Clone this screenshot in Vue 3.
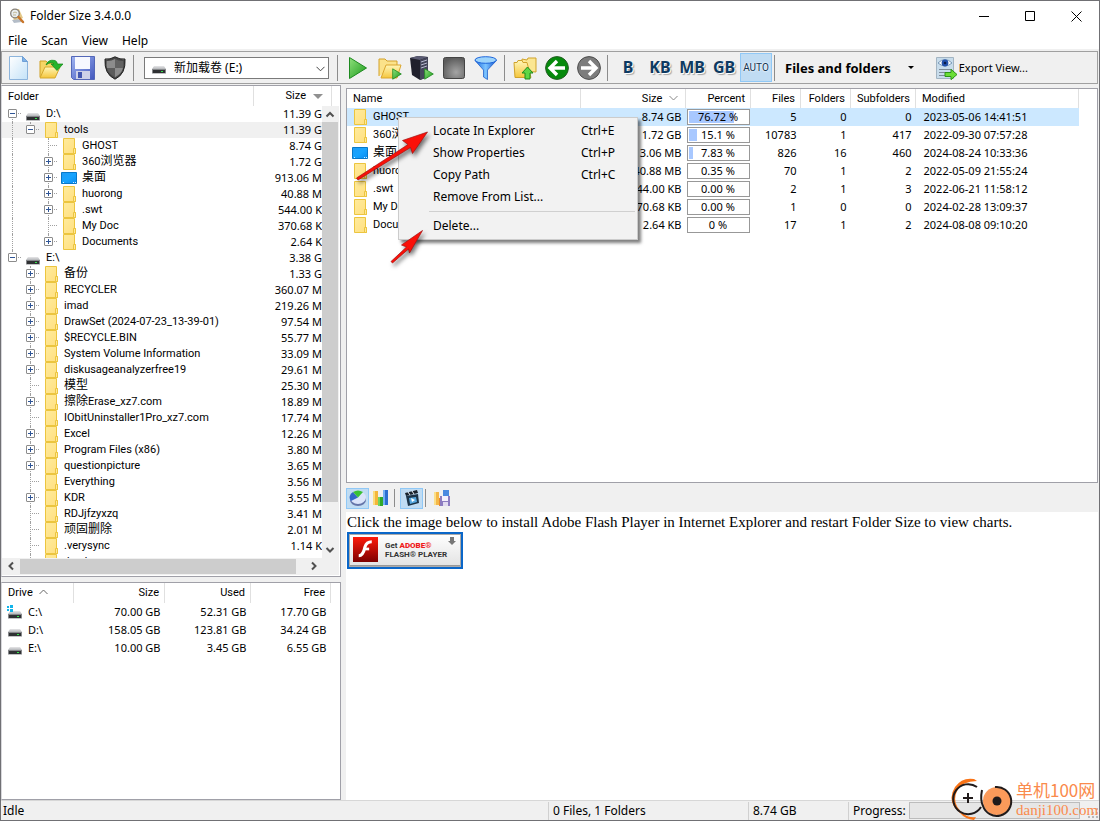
<script setup>
import { ref } from 'vue'

const menus = ['File', 'Scan', 'View', 'Help']
const units = ['B', 'KB', 'MB', 'GB']
const scope = ref('e')

// g: guide columns to the left of the node; box: '+', '-' or '' for a leaf
const tree = [
  { g: [], box: '-', icon: 'drive', name: 'D:\\', size: '11.39 G', first: true },
  { g: ['v'], box: '-', icon: 'folder', name: 'tools', size: '11.39 G', sel: true, last: true },
  { g: ['v', ''], box: '', icon: 'folder', name: 'GHOST', size: '8.74 G' },
  { g: ['v', ''], box: '+', icon: 'folder', name: '360浏览器', size: '1.72 G' },
  { g: ['v', ''], box: '+', icon: 'desktop', name: '桌面', size: '913.06 M' },
  { g: ['v', ''], box: '+', icon: 'folder', name: 'huorong', size: '40.88 M' },
  { g: ['v', ''], box: '+', icon: 'folder', name: '.swt', size: '544.00 K' },
  { g: ['v', ''], box: '', icon: 'folder', name: 'My Doc', size: '370.68 K' },
  { g: ['v', ''], box: '+', icon: 'folder', name: 'Documents', size: '2.64 K', last: true },
  { g: [], box: '-', icon: 'drive', name: 'E:\\', size: '3.38 G', last: true },
  { g: [''], box: '+', icon: 'folder', name: '备份', size: '1.33 G' },
  { g: [''], box: '+', icon: 'folder', name: 'RECYCLER', size: '360.07 M' },
  { g: [''], box: '+', icon: 'folder', name: 'imad', size: '219.26 M' },
  { g: [''], box: '+', icon: 'folder', name: 'DrawSet (2024-07-23_13-39-01)', size: '97.54 M' },
  { g: [''], box: '+', icon: 'folder', name: '$RECYCLE.BIN', size: '55.77 M' },
  { g: [''], box: '+', icon: 'folder', name: 'System Volume Information', size: '33.09 M' },
  { g: [''], box: '+', icon: 'folder', name: 'diskusageanalyzerfree19', size: '29.61 M' },
  { g: [''], box: '', icon: 'folder', name: '模型', size: '25.30 M' },
  { g: [''], box: '+', icon: 'folder', name: '擦除Erase_xz7.com', size: '18.89 M' },
  { g: [''], box: '', icon: 'folder', name: 'IObitUninstaller1Pro_xz7.com', size: '17.74 M' },
  { g: [''], box: '+', icon: 'folder', name: 'Excel', size: '12.26 M' },
  { g: [''], box: '+', icon: 'folder', name: 'Program Files (x86)', size: '3.80 M' },
  { g: [''], box: '+', icon: 'folder', name: 'questionpicture', size: '3.65 M' },
  { g: [''], box: '', icon: 'folder', name: 'Everything', size: '3.56 M' },
  { g: [''], box: '+', icon: 'folder', name: 'KDR', size: '3.55 M' },
  { g: [''], box: '', icon: 'folder', name: 'RDJjfzyxzq', size: '3.41 M' },
  { g: [''], box: '', icon: 'folder', name: '顽固删除', size: '2.01 M' },
  { g: [''], box: '', icon: 'folder', name: '.verysync', size: '1.14 K' },
  { g: [''], box: '', icon: 'folder', name: '.bash', size: '' },
]

const drives = [
  { name: 'C:\\', size: '70.00 GB', used: '52.31 GB', free: '17.70 GB', icon: 'sysdrive' },
  { name: 'D:\\', size: '158.05 GB', used: '123.81 GB', free: '34.24 GB', icon: 'drive' },
  { name: 'E:\\', size: '10.00 GB', used: '3.45 GB', free: '6.55 GB', icon: 'drive' },
]

const files = [
  { name: 'GHOST', size: '8.74 GB', pct: 76.72, label: '76.72 %', files: 5, folders: 0, subs: 0, mod: '2023-05-06 14:41:51', icon: 'folder', sel: true },
  { name: '360浏览器', size: '1.72 GB', pct: 15.1, label: '15.1 %', files: 10783, folders: 1, subs: 417, mod: '2022-09-30 07:57:28', icon: 'folder' },
  { name: '桌面', size: '913.06 MB', pct: 7.83, label: '7.83 %', files: 826, folders: 16, subs: 460, mod: '2024-08-24 10:33:36', icon: 'desktop' },
  { name: 'huorong', size: '40.88 MB', pct: 0, label: '0.35 %', files: 70, folders: 1, subs: 2, mod: '2022-05-09 21:55:24', icon: 'folder' },
  { name: '.swt', size: '544.00 KB', pct: 0, label: '0.00 %', files: 2, folders: 1, subs: 3, mod: '2022-06-21 11:58:12', icon: 'folder' },
  { name: 'My Doc', size: '370.68 KB', pct: 0, label: '0.00 %', files: 1, folders: 0, subs: 0, mod: '2024-02-28 13:09:37', icon: 'folder' },
  { name: 'Documents', size: '2.64 KB', pct: 0, label: '0 %', files: 17, folders: 1, subs: 2, mod: '2024-08-08 09:10:20', icon: 'folder' },
]

const actions = [
  { text: 'Locate In Explorer', key: 'Ctrl+E' },
  { text: 'Show Properties', key: 'Ctrl+P' },
  { text: 'Copy Path', key: 'Ctrl+C' },
  { text: 'Remove From List...', key: '' },
]

// Han runs are set one size larger than Latin runs
const runs = (s) => s.match(/[\u4e00-\u9fff]+|[^\u4e00-\u9fff]+/g).map((t) => ({ t, han: /[\u4e00-\u9fff]/.test(t) }))
</script>

<template>
  <svg class="defs" aria-hidden="true">
    <defs>
      <linearGradient id="gFold" x1="0" y1="0" x2="1" y2="1"><stop offset="0" stop-color="#ffeb9c" /><stop offset="1" stop-color="#ffdf80" /></linearGradient>
      <linearGradient id="gYel" x1="0" y1="0" x2="0" y2="1"><stop offset="0" stop-color="#fff6b8" /><stop offset="1" stop-color="#f5c63c" /></linearGradient>
      <linearGradient id="gGreen" x1="0" y1="0" x2="1" y2="1"><stop offset="0" stop-color="#8fe07c" /><stop offset="1" stop-color="#1b9a1b" /></linearGradient>
      <linearGradient id="gPage" x1="0" y1="0" x2="1" y2="1"><stop offset="0" stop-color="#ffffff" /><stop offset="1" stop-color="#c3e2f8" /></linearGradient>
      <linearGradient id="gSave" x1="0" y1="0" x2="1" y2="1"><stop offset="0" stop-color="#9fb4f2" /><stop offset="1" stop-color="#4257bd" /></linearGradient>
      <linearGradient id="gBlue" x1="0" y1="0" x2="1" y2="0"><stop offset="0" stop-color="#1a6ae0" /><stop offset="0.5" stop-color="#7cc4ff" /><stop offset="1" stop-color="#0e50d0" /></linearGradient>
      <radialGradient id="gStop" cx="0.6" cy="0.7" r="0.7"><stop offset="0" stop-color="#a4a4a4" /><stop offset="1" stop-color="#5c5c5c" /></radialGradient>
      <linearGradient id="gDesk" x1="0" y1="0" x2="1" y2="1"><stop offset="0" stop-color="#1f9cf5" /><stop offset="0.5" stop-color="#17a4ff" /><stop offset="1" stop-color="#0a8cf0" /></linearGradient>
      <linearGradient id="gDrive" x1="0" y1="0" x2="0" y2="1"><stop offset="0" stop-color="#e6e6e8" /><stop offset="1" stop-color="#b4b6b9" /></linearGradient>
      <linearGradient id="gFlash" x1="0" y1="0" x2="0" y2="1"><stop offset="0" stop-color="#ff1a0a" /><stop offset="1" stop-color="#7c0000" /></linearGradient>
      <symbol id="folder" viewBox="0 0 16 16">
        <path d="M2.500.5h11v10h1v5h-12z" fill="url(#gFold)" stroke="#ecc53f" />
        <path d="M12.500 10.500h2v5h-2z" fill="#ffe89a" stroke="#ecc53f" />
      </symbol>
      <symbol id="desktop" viewBox="0 0 16 16">
        <path d="M.5 2.500h15v11H.5z" fill="url(#gDesk)" stroke="#0878c8" />
        <path d="M2 12.500h1m9 0h1m1 0h1" stroke="#d8f0ff" />
      </symbol>
      <symbol id="drive" viewBox="0 0 16 16">
        <path d="M3 7h10l2 3H1z" fill="url(#gDrive)" />
        <path d="M1 10h14v4.500H1z" fill="#85878a" /><path d="M2 11h12v3H2z" fill="#2f3133" />
        <path d="M10 12h2v1h-2z" fill="#35e64a" />
      </symbol>
      <symbol id="sysdrive" viewBox="0 0 16 16">
        <path d="M3 7h10l2 3H1z" fill="url(#gDrive)" />
        <path d="M1 10h14v4.500H1z" fill="#85878a" /><path d="M2 11h12v3H2z" fill="#2f3133" /><path d="M10 12h2v1h-2z" fill="#35e64a" />
        <path d="M0 2h2v2H0zM3 1h3v3H3zM0 5h2v2H0zM3 5h3v3H3z" fill="#12b4ea" />
      </symbol>
      <symbol id="play" viewBox="0 0 10 12"><path d="M.7.8 9.300 6 .7 11.200z" fill="url(#gGreen)" stroke="#218a21" stroke-width=".8" stroke-linejoin="round" /></symbol>
    </defs>
  </svg>

  <div class="window">
    <header class="title">
      <svg class="app" viewBox="0 0 16 16" aria-hidden="true">
        <path d="M2 2 10 1l4 9-9 3z" fill="#e3c888" /><path d="M3 12 11 11l2 3-8 1z" fill="#b4bdc8" />
        <circle cx="6" cy="5.500" r="4.300" fill="#e9eef0" stroke="#85807a" stroke-width="1.300" />
        <path d="M4 5q2-2 4 0M4 7h3" stroke="#c2b894" fill="none" />
        <path d="m9.500 9 4.500 5" stroke="#c8762b" stroke-width="2.500" stroke-linecap="round" />
      </svg>
      <h1>Folder Size 3.4.0.0</h1>
      <button class="cap" aria-label="Minimize"><svg viewBox="0 0 11 11"><path d="M0 5.500h10" stroke="#000" /></svg></button>
      <button class="cap" aria-label="Maximize"><svg viewBox="0 0 11 11"><path d="M.5.5h9v9h-9z" fill="none" stroke="#000" /></svg></button>
      <button class="cap" aria-label="Close"><svg viewBox="0 0 11 11"><path d="m.5.5 10 10m0-10-10 10" stroke="#000" /></svg></button>
    </header>

    <nav class="menubar"><button v-for="m in menus" :key="m">{{ m }}</button></nav>

    <div class="toolbar" role="toolbar">
      <button class="tb" aria-label="New">
        <svg viewBox="0 0 24 24"><path d="M2.500.5h13l5 5v18h-18z" fill="url(#gPage)" stroke="#8cb4dc" /><path d="M15.500.5v5h5z" fill="#7fb2e6" stroke="#6f9fd6" /></svg>
      </button>
      <button class="tb" aria-label="Open">
        <svg viewBox="0 0 24 24"><path d="M1 21V5h6l2 2h7v5" fill="#f5d565" stroke="#d0a024" /><path d="M1 22 6 11h15l-5 11z" fill="url(#gYel)" stroke="#d5a82c" /><path d="M7 9q2-6 9-4.500 2 .8 2.500 3.500H24l-6 6.500L12 8h3q-3-3-8 1z" fill="#27b42c" stroke="#118618" stroke-width=".7" /></svg>
      </button>
      <button class="tb" aria-label="Save">
        <svg viewBox="0 0 24 24"><path d="M.5.5h23v23h-21l-2-2z" fill="url(#gSave)" stroke="#5367b8" /><path d="M4 1h15v12H4z" fill="#f6f8ff" /><path d="M5 15h14v8H5z" fill="#cdd2e8" /><path d="M7 16h4v6H7z" fill="#4257b0" /></svg>
      </button>
      <button class="tb" aria-label="Run as administrator">
        <svg viewBox="0 0 24 24"><path d="M12 .8q5 3 10 2.200 1 15-10 20.200Q1 18 2 3 7 3.800 12 .8z" fill="#484848" stroke="#222" /><path d="M12 3v9H4Q3.300 9 3.700 5 8 5.400 12 3z" fill="#8c8c8c" /><path d="M12 12h8q-1.500 6-8 9.200z" fill="#8c8c8c" /><path d="M12 3q4 2.400 8.300 2 .4 4-.3 7h-8z" fill="#626262" /><path d="M4 12h8v9.200Q5.500 18 4 12z" fill="#5c5c5c" /></svg>
      </button>
      <span class="sep"></span>
      <label class="combo">
        <svg class="ic16" aria-hidden="true"><use href="#drive" /></svg>
        <select v-model="scope" aria-label="Drive to scan"><option value="e">新加载卷 (E:)</option></select>
        <svg class="chev" viewBox="0 0 9 6" aria-hidden="true"><path d="m.5.8 4 4 4-4" fill="none" stroke="#444" /></svg>
      </label>
      <span class="sep"></span>
      <button class="tb" aria-label="Start scan"><svg viewBox="0 0 24 24"><path d="M3.500 1.500v21L20.500 12z" fill="url(#gGreen)" stroke="#1d8a1f" stroke-linejoin="round" /></svg></button>
      <button class="tb" aria-label="Scan folder">
        <svg viewBox="0 0 24 24"><path d="M1 20V3h6l2 2h10v5" fill="#fbe28a" stroke="#d3a12b" /><path d="m3 22 5-13h15l-4 13z" fill="url(#gYel)" stroke="#dba62e" /><use href="#play" x="14" y="12" width="10" height="12" /></svg>
      </button>
      <button class="tb" aria-label="Scan computer">
        <svg viewBox="0 0 24 24"><path d="m0 2 8-2 10 1v20l-8 3-8-5z" fill="#20202c" /><path d="m0 2 8-2 10 1-8 3z" fill="#5b5c74" /><path d="m10 4 8-3v20l-8 3z" fill="#45465a" /><path d="m11 6 6-2m-6 5 6-2m-6 5 6-2" stroke="#b7b9d0" /><use href="#play" x="14" y="12" width="10" height="12" /></svg>
      </button>
      <button class="tb" aria-label="Stop"><svg viewBox="0 0 24 24"><rect x="1.500" y="1.500" width="21" height="21" rx="2" fill="url(#gStop)" stroke="#444" /></svg></button>
      <button class="tb" aria-label="Filter">
        <svg viewBox="0 0 24 24"><path d="M1 4.500 9.500 14v7l4 2.500V14L22.500 4.500z" fill="url(#gBlue)" stroke="#1354c4" stroke-width=".7" /><ellipse cx="11.700" cy="4" rx="10.700" ry="3.300" fill="#9dd4fb" stroke="#1e66dc" /></svg>
      </button>
      <span class="sep"></span>
      <button class="tb" aria-label="Up one level">
        <svg viewBox="0 0 24 24"><path d="M9 15V3l5 1 1-2h8v14z" fill="#fbe692" stroke="#d0a32b" /><path d="M1 6.500h3l1-2h4l1 2h4l4 15H2z" fill="url(#gYel)" stroke="#d0a32b" /><path d="m14.500 11 5.500 6h-3v6h-5v-6H9z" fill="#5fd645" stroke="#1f8a1c" /></svg>
      </button>
      <button class="tb" aria-label="Back"><svg viewBox="0 0 24 24"><circle cx="12" cy="12" r="11.400" fill="#068a0c" stroke="#245c24" /><path d="M20 12H6m6-7-7 7 7 7" fill="none" stroke="#fff" stroke-width="3.400" /></svg></button>
      <button class="tb" aria-label="Forward"><svg viewBox="0 0 24 24"><circle cx="12" cy="12" r="11.400" fill="#7c7c7c" stroke="#4c4c4c" /><path d="M4 12h14m-6-7 7 7-7 7" fill="none" stroke="#fff" stroke-width="3.400" /></svg></button>
      <span class="sep"></span>
      <button v-for="u in units" :key="u" class="tb unit">{{ u }}</button>
      <button class="tb auto" aria-pressed="true">AUTO</button>
      <span class="sep"></span>
      <button class="scope">Files and folders <i class="caret"></i></button>
      <button class="export">
        <svg viewBox="0 0 24 24" aria-hidden="true"><path d="M2.500 1.500h17v21h-17z" fill="#c8dceb" stroke="#a3b4c2" /><path d="M4 7q7-7 14 0-7 6-14 0z" fill="#fff" stroke="#7898b8" /><circle cx="11" cy="7" r="3.400" fill="#2452ac" /><circle cx="11" cy="7" r="1.300" fill="#0a1c48" /><path d="M5 13.500h12M5 16.500h6m-6 3h6" stroke="#7d8b98" /><path d="M11 16.500h6v-3.200l6 5.200-6 5.200v-3.200h-6z" fill="#6ade34" stroke="#2d9418" /></svg>
        Export View...
      </button>
    </div>

    <main class="body">
      <section class="side">
        <div class="panel folders">
          <div class="head"><span class="grow">Folder</span><span class="hsize">Size <i class="down"></i></span></div>
          <div class="scrollrow">
            <div class="clip">
              <table class="tree" aria-label="Folders">
                <tbody>
                  <tr v-for="(n, i) in tree" :key="i" :class="{ sel: n.sel }">
                    <td>
                      <div class="node">
                        <span v-for="(k, j) in n.g" :key="j" class="guide" :class="k"></span>
                        <span class="guide tee" :class="{ last: n.last, first: n.first }">
                          <button v-if="n.box" class="box" :aria-label="(n.box === '+' ? 'Expand ' : 'Collapse ') + n.name"><svg viewBox="0 0 9 9"><path :d="n.box === '+' ? 'M2 4.500h5M4.500 2v5' : 'M2 4.500h5'" stroke="#2f5596" /></svg></button>
                        </span>
                        <svg class="ic16" aria-hidden="true"><use :href="'#' + n.icon" /></svg>
                        <span class="name"><span v-for="(r, q) in runs(n.name)" :key="q" :class="{ han: r.han }">{{ r.t }}</span></span>
                      </div>
                    </td>
                    <td class="num">{{ n.size }}</td>
                  </tr>
                </tbody>
              </table>
            </div>
            <div class="vbar" aria-hidden="true">
              <svg viewBox="0 0 16 16"><path d="m4.500 10.500 3.500-3.500 3.500 3.500" fill="none" stroke="#505050" stroke-width="2" /></svg>
              <i class="thumb"></i><i class="rest"></i>
              <svg viewBox="0 0 16 16"><path d="m4.500 6 3.500 3.500L11.500 6" fill="none" stroke="#505050" stroke-width="2" /></svg>
            </div>
          </div>
          <div class="hbar" aria-hidden="true">
            <svg viewBox="0 0 16 16"><path d="M10 4.500 6.500 8l3.500 3.500" fill="none" stroke="#505050" stroke-width="2" /></svg>
            <i class="thumb"></i><i class="rest"></i>
            <svg viewBox="0 0 16 16"><path d="M6 4.500 9.500 8 6 11.500" fill="none" stroke="#505050" stroke-width="2" /></svg>
            <i class="corner"></i>
          </div>
        </div>

        <div class="panel drives">
          <table class="list">
            <colgroup><col /><col class="w91" /><col class="w86" /><col class="w80" /></colgroup>
            <thead><tr>
              <th class="l">Drive <svg class="sort" viewBox="0 0 9 6"><path d="m.5 5 4-4 4 4" fill="none" stroke="#666" /></svg></th>
              <th>Size</th><th>Used</th><th>Free</th>
            </tr></thead>
            <tbody>
              <tr v-for="d in drives" :key="d.name">
                <td><div class="cell"><svg class="ic16" aria-hidden="true"><use :href="'#' + d.icon" /></svg>{{ d.name }}</div></td>
                <td class="num">{{ d.size }}</td><td class="num">{{ d.used }}</td><td class="num">{{ d.free }}</td>
              </tr>
            </tbody>
          </table>
        </div>
      </section>

      <section class="content">
        <div class="panel files">
          <table class="list">
            <colgroup><col /><col class="w105" /><col class="w65" /><col class="w50" /><col class="w50" /><col class="w65" /><col class="w163" /></colgroup>
            <thead><tr>
              <th class="l">Name</th>
              <th>Size <svg class="sort" viewBox="0 0 9 6"><path d="m.5 1 4 4 4-4" fill="none" stroke="#888" /></svg></th>
              <th>Percent</th><th>Files</th><th>Folders</th><th>Subfolders</th><th class="l">Modified</th>
            </tr></thead>
            <tbody>
              <tr v-for="f in files" :key="f.name" :class="{ sel: f.sel }">
                <td><div class="cell"><svg class="ic16" aria-hidden="true"><use :href="'#' + f.icon" /></svg><span class="name"><span v-for="(r, q) in runs(f.name)" :key="q" :class="{ han: r.han }">{{ r.t }}</span></span></div></td>
                <td class="num">{{ f.size }}</td>
                <td class="pc"><div class="pbox"><div class="ptrack"><div class="pfill" :style="{ width: f.pct + '%' }"></div></div><span>{{ f.label }}</span></div></td>
                <td class="num">{{ f.files }}</td><td class="num">{{ f.folders }}</td><td class="num">{{ f.subs }}</td>
                <td class="mod">{{ f.mod }}</td>
              </tr>
            </tbody>
          </table>

          <div class="popup" role="menu">
            <button v-for="a in actions" :key="a.text" role="menuitem"><span>{{ a.text }}</span><kbd>{{ a.key }}</kbd></button>
            <hr />
            <button role="menuitem"><span>Delete...</span></button>
          </div>
          <svg class="arrows" viewBox="0 0 80 146" aria-hidden="true">
            <path d="M3.500 60 55 26.500 49.500 22.500 74.500 14 59.500 35.500 57.500 29.500 5 62z" fill="#fa1008" stroke="#a01010" stroke-width=".7" />
            <path d="M38 143.500 53.500 129 48.500 127 69.500 112.500 56.500 135 55.500 131 39.500 145z" fill="#fa1008" stroke="#a01010" stroke-width=".7" />
          </svg>
        </div>

        <div class="charts" role="toolbar">
          <button class="on" aria-label="Pie chart">
            <svg viewBox="0 0 18 18"><ellipse cx="9" cy="11" rx="8" ry="6" fill="#6474a8" /><ellipse cx="9" cy="8.500" rx="8" ry="6.500" fill="#dbe4fa" /><path d="M9 8.500 2 12a8 6.500 0 0 1 2-9z" fill="#3266c8" /><path d="M9 8.500 4 3q5-3 10 0z" fill="#39c136" /></svg>
          </button>
          <button aria-label="Bar chart">
            <svg viewBox="0 0 18 18"><path d="M1 2h5v14H1z" fill="#f4b63a" /><path d="M1 2h2v14H1z" fill="#fbdc7c" /><path d="M6 8h5v9H6z" fill="#31a82a" /><path d="M6 8h2v9H6z" fill="#70d45e" /><path d="M11 1h5v15h-5z" fill="#2c6fd0" /><path d="M11 1h2v15h-2z" fill="#72b0f4" /></svg>
          </button>
          <span class="sep"></span>
          <button class="on" aria-label="Animation">
            <svg viewBox="0 0 18 18"><path d="m2 4 12-3 1 3L3 7z" fill="#18222c" /><path d="m5 3 2 3m2-4 2 3" stroke="#e8eef4" /><path d="m3 7 12-2 1 9-11 3z" fill="#1c3448" /><path d="m6 9 7-1 1 5-7 2z" fill="#56a8e0" /><path d="m8 9 4 2-3 2z" fill="#fff" /></svg>
          </button>
          <span class="sep"></span>
          <button aria-label="Save chart">
            <svg viewBox="0 0 18 18"><path d="M0 3h5v13H0z" fill="#f4b848" /><path d="M0 3h2v13H0z" fill="#fbe08c" /><path d="M5 9h3v8H5z" fill="#e68a30" /><path d="M9 1h6v8H9z" fill="#4a8ae0" /><path d="M6 7h10v10H6z" fill="#8c7cc0" /><path d="M8 7h6v5H8z" fill="#f4f0fc" /><path d="M9 13h5v4H9z" fill="#e2dcf0" /></svg>
          </button>
        </div>

        <div class="web">
          <p>Click the image below to install Adobe Flash Player in Internet Explorer and restart Folder Size to view charts.</p>
          <a class="flash" href="#flash" aria-label="Get Adobe Flash Player">
            <svg viewBox="0 0 24 24" aria-hidden="true"><path d="M0 0h24v24H0z" fill="url(#gFlash)" /><path d="M18 4.500q-5 0-6.500 5-1.800 8.500-6 8.500" fill="none" stroke="#fff" stroke-width="3" /><path d="M10.500 11.500h5" stroke="#fff" stroke-width="2.600" /></svg>
            <span class="ftext"><span>Get <b>ADOBE®</b></span><span>FLASH® PLAYER</span></span>
            <svg class="dl" viewBox="0 0 8 8" aria-hidden="true"><path d="M2 0h4v4h2L4 8 0 4h2z" fill="#777" /></svg>
          </a>
        </div>
      </section>
    </main>

    <footer class="status">
      <span class="grow">Idle</span>
      <span class="s200">0 Files, 1 Folders</span>
      <span class="s100">8.74 GB</span>
      <span class="prog">Progress:<i class="bar"></i></span>
      <svg class="grip" viewBox="0 0 10 10" aria-hidden="true"><path d="M8 0h2v2H8zM4 4h2v2H4zM8 4h2v2H8zM0 8h2v2H0zM4 8h2v2H4zM8 8h2v2H8z" fill="#b8b8b8" /></svg>
    </footer>

    <div class="mark">
      <svg viewBox="0 0 64 42" aria-hidden="true">
        <path d="M10 35Q-4 23 5 9 12-1 24 1l3 2Q12 3 7 13q-6 13 7 23 5 4 12 3l-2 3Q15 41 10 35z" fill="#f97316" />
        <path d="M27 9A15 15 0 1 0 31 29" fill="none" stroke="#211b1b" stroke-width="2" />
        <path d="M13 20h10m-5-5v10" stroke="#211b1b" stroke-width="2" />
        <circle cx="47" cy="23" r="14" fill="#fb9a5a" /><circle cx="47" cy="23" r="4.500" fill="#211b1b" />
        <path d="M45 9a14.500 14.500 0 1 1-12 19q-3-6-1-16" fill="none" stroke="#211b1b" stroke-width="2" />
      </svg>
      <div><strong>单机100网</strong><em>danji100.com</em></div>
    </div>
  </div>
</template>

<style>
body { background: #f0f0f0; }
</style>

<style scoped>
* { box-sizing: border-box; }
.defs { position: absolute; width: 0; height: 0; }
.window {
  position: relative; display: flex; flex-direction: column; height: 100vh; min-height: 600px; overflow: hidden;
  border: 1px solid #707074; background: #f0f0f0; color: #000;
  font-family: "Noto Sans", "Noto Sans CJK SC", sans-serif; font-size: 11px;
}
button { font: inherit; color: inherit; border: 0; background: none; padding: 0; margin: 0; }
svg { display: block; flex: none; }
.ic16 { width: 16px; height: 16px; }
.name, .head, .list th { font-family: Roboto, "Noto Sans", sans-serif; }
.han { font-size: 12px; font-family: "Noto Sans CJK SC", sans-serif; line-height: 1px; }
.grow { flex: 1; }

.title { display: flex; align-items: center; height: 30px; padding-left: 8px; background: #fff; }
.app { width: 16px; height: 16px; }
.title h1 { flex: 1; margin: 0 0 0 5px; font-size: 12px; font-weight: 400; line-height: 16px; }
.cap { display: grid; place-items: center; width: 46px; height: 30px; }
.cap svg { width: 11px; height: 11px; }
.menubar { display: flex; gap: 14px; height: 18px; padding-left: 7px; background: #fff; font-size: 12px; line-height: 20px; }

.toolbar { display: flex; align-items: center; height: 33px; margin: 2px 1px 0 0; padding-left: 1px; border: 1px solid #a0a0a0; overflow: hidden; }
.tb { flex: none; display: grid; place-items: center; width: 32px; height: 29px; }
.tb svg { width: 24px; height: 24px; }
.sep { flex: none; width: 1px; height: 26px; margin: 0 4px 0 2px; background: #8c8c8c; }
.combo { position: relative; display: flex; width: 185px; height: 22px; margin: 0 6px; }
.combo select {
  width: 100%; height: 22px; padding: 0 20px 0 29px; border: 1px solid #7a7a7a; border-radius: 0; appearance: none;
  background: #fff; color: #000; font-family: inherit; font-size: 12px;
}
.combo .ic16 { position: absolute; left: 7px; top: 2px; }
.combo .chev { position: absolute; right: 4px; top: 9px; width: 9px; height: 6px; }
.unit { padding-bottom: 2px; color: #0d3a62; font-size: 16px; font-weight: 700; text-shadow: 1px 1px 0 #fff, 2px 2px 1px #a8a8a8; }
.auto { border: 1px solid #90c8f6; background: #c0dcf3; color: #12324e; font-family: Roboto, sans-serif; font-size: 10px; text-shadow: 0 0 2px #fff, 0 0 2px #fff; }
.scope { display: flex; align-items: center; gap: 17px; margin-left: 6px; font-size: 13px; font-weight: 700; white-space: nowrap; }
.caret { border: 3px solid transparent; border-top-color: #000; border-bottom: 0; }
.export { display: flex; align-items: center; gap: 1px; margin-left: 20px; white-space: nowrap; }
.export svg { width: 24px; height: 24px; }

.body { flex: 1; display: flex; gap: 5px; min-height: 0; padding: 1px 1px 0 0; }
.side { flex: none; display: flex; flex-direction: column; gap: 5px; width: 340px; }
.panel { position: relative; min-height: 0; border: 1px solid #a0a0a8; background: #fff; }
.side .panel { border-left: 1px solid #d8d8dc; }
.folders { flex: 492 1 0; display: flex; flex-direction: column; padding: 0 1px 1px 0; }
.drives { flex: 218 1 0; overflow: hidden; }
.head { display: flex; height: 20px; padding: 0 7px 0 6px; line-height: 22px; }
.head .grow { border-right: 1px solid #e0e0e0; }
.hsize { display: flex; align-items: center; justify-content: flex-end; gap: 7px; width: 78px; padding-right: 8px; border-right: 1px solid #e0e0e0; }
.down { border: 5px solid transparent; border-top-color: #909090; border-bottom: 0; }
.scrollrow { flex: 1; display: flex; min-height: 0; }
.clip { flex: 1; overflow: hidden; }
table { border-collapse: collapse; }
.tree { width: 100%; }
.tree td { height: 16px; padding: 0; line-height: 16px; white-space: nowrap; }
.tree .sel { background: #f0f0f0; }
.num { text-align: right; }
.node { display: flex; height: 16px; padding-left: 1px; }
.node .ic16 { margin: 0 5px 0 4px; }
.guide { position: relative; flex: none; width: 18px; height: 16px; }
.v::before, .tee::before { content: ""; position: absolute; left: 9px; top: 0; bottom: 0; border-left: 1px dotted #a0a0a0; }
.tee.last::before { bottom: 8px; }
.tee.first::before { top: 8px; }
.tee::after { content: ""; position: absolute; left: 9px; right: 0; top: 7px; border-top: 1px dotted #a0a0a0; }
.box { position: absolute; left: 5px; top: 3px; width: 9px; height: 9px; border: 1px solid #8c8c8c; background: #fff; z-index: 1; border-radius: 1px; }
.box svg { width: 9px; height: 9px; margin: -1px; }
.vbar { display: flex; flex-direction: column; width: 17px; background: #f0f0f0; }
.vbar svg, .hbar svg { width: 16px; height: 16px; }
.thumb { background: #cdcdcd; }
.vbar .thumb { flex: 380; margin: 0 1px 0 0; }
.vbar .rest { flex: 40; }
.hbar { display: flex; height: 17px; padding: 0 0 0 1px; align-items: center; background: #f0f0f0; }
.hbar .thumb { flex: 276; height: 15px; margin-left: 1px; }
.hbar .rest { flex: 10; }
.hbar .corner { width: 17px; }

.list { width: 100%; table-layout: fixed; }
.list th { height: 20px; padding: 0 5px 0 0; border-right: 1px solid #e0e0e0; font-weight: 400; text-align: right; line-height: 16px; white-space: nowrap; }
.list th.l { padding-left: 6px; text-align: left; }
.list td { height: 18px; padding: 0 4px 0 0; line-height: 16px; white-space: nowrap; }
.drives .list { width: calc(100% - 9px); }
.drives .list th { padding-top: 1px; }
.drives .cell { padding-left: 5px; }
.files .list { width: calc(100% - 18px); }
.files .list th { height: 19px; }
.list .sel { background: #cce8ff; }
.sort { display: inline-block; width: 9px; height: 6px; margin: 0 2px 2px 4px; vertical-align: middle; }
.cell { display: flex; align-items: center; gap: 5px; padding-left: 5px; }
.w91 { width: 91px; } .w86 { width: 86px; } .w80 { width: 80px; }
.w105 { width: 105px; } .w65 { width: 65px; } .w50 { width: 50px; } .w163 { width: 163px; }
.list td.pc { padding: 0 1px; }
.pbox { position: relative; height: 16px; padding: 1px; border: 1px solid #989898; background: #fff; text-align: center; line-height: 14px; }
.ptrack { height: 12px; }
.pfill { height: 12px; background: #a8c8ff; }
.pbox span { position: absolute; inset: 0; }
.list td.mod { padding-left: 8px; }

.content { flex: 1; display: flex; flex-direction: column; min-width: 0; padding-top: 3px; }
.files { flex: 395 1 0; }
.popup {
  position: absolute; left: 51px; top: 28px; width: 240px; padding: 2px; border: 1px solid #ccc; background: #f2f2f2;
  box-shadow: 3px 3px 3px rgba(0, 0, 0, .5); font-size: 12px;
}
.popup button { display: flex; justify-content: space-between; width: 100%; height: 22px; padding: 0 18px 0 32px; line-height: 22px; text-align: left; }
.popup kbd { width: 36px; font: inherit; text-align: left; }
.popup hr { margin: 3px 0 3px 28px; border: 0; border-top: 1px solid #d0d0d0; }
.arrows { position: absolute; left: 6px; top: 29px; width: 80px; height: 146px; filter: drop-shadow(2px 3px 2px rgba(0, 0, 0, .55)); }

.charts { display: flex; align-items: center; height: 29px; padding-top: 2px; }
.charts button { display: grid; place-items: center; width: 23px; height: 21px; border: 1px solid transparent; }
.charts .on { border-color: #90c8f6; background: #c0dcf3; }
.charts svg { width: 18px; height: 18px; }
.charts .sep { height: 18px; margin: 0 5px 0 2px; }
.web { flex: 288 1 0; min-height: 0; padding: 1px 1px; background: #fff; overflow: hidden; }
.web p { margin: 0; font-family: "Liberation Serif", serif; font-size: 15px; line-height: 19px; }
.flash {
  display: flex; gap: 7px; width: 116px; height: 37px; padding: 3px 4px; border: 2px solid #0a66c8; color: #333;
  background: linear-gradient(#fff, #e2e2e2); box-shadow: inset 0 0 0 1px #aaa, inset 0 -2px 0 #999; text-decoration: none;
}
.flash svg { width: 25px; height: 25px; }
.ftext { display: flex; flex-direction: column; padding-top: 4px; font-family: Roboto, sans-serif; font-size: 8px; font-weight: 700; line-height: 9px; white-space: nowrap; }
.ftext b { color: #f01c1c; }
.flash .dl { position: absolute; width: 8px; height: 8px; margin-left: 95px; }

.status { display: flex; align-items: stretch; height: 20px; border-top: 1px solid #d7d7d7; padding-left: 2px; font-size: 12px; line-height: 19px; }
.status > span + span { border-left: 1px solid #d0d0d0; padding-left: 4px; margin-top: 1px; line-height: 18px; }
.s200 { width: 200px; }
.s100 { width: 100px; }
.prog { display: flex; width: 232px; }
.bar { flex: 1; height: 17px; margin-left: 3px; border: 1px solid #bcbcbc; background: #e6e6e6; }
.grip { width: 10px; height: 10px; margin: 7px 1px 0 8px; }

.mark { position: absolute; right: 0; bottom: 0; display: flex; gap: 2px; color: #fa8a4c; }
.mark svg { width: 64px; height: 42px; }
.mark div { display: flex; flex-direction: column; width: 83px; }
.mark strong { font-family: "Noto Sans CJK SC", sans-serif; font-size: 17px; font-weight: 400; line-height: 24px; white-space: nowrap; }
.mark em { font-family: "Liberation Serif", serif; font-size: 15px; font-style: normal; line-height: 16px; }
</style>
